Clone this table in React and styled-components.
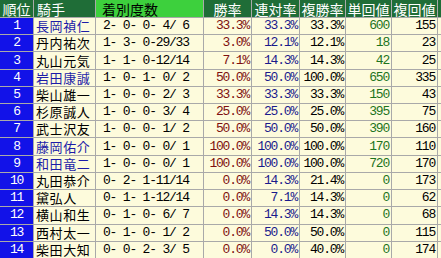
import React from "react";
import styled, { createGlobalStyle } from "styled-components";

const rows = [
  ["長岡禎仁", true, "2- 0- 0- 4/ 6", "33.3%", "33.3%", "33.3%", "600", "155"],
  ["丹内祐次", false, "1- 3- 0-29/33", "3.0%", "12.1%", "12.1%", "18", "23"],
  ["丸山元気", false, "1- 1- 0-12/14", "7.1%", "14.3%", "14.3%", "42", "25"],
  ["岩田康誠", true, "1- 0- 1- 0/ 2", "50.0%", "50.0%", "100.0%", "650", "335"],
  ["柴山雄一", false, "1- 0- 0- 2/ 3", "33.3%", "33.3%", "33.3%", "150", "43"],
  ["杉原誠人", false, "1- 0- 0- 3/ 4", "25.0%", "25.0%", "25.0%", "395", "75"],
  ["武士沢友", false, "1- 0- 0- 1/ 2", "50.0%", "50.0%", "50.0%", "390", "160"],
  ["藤岡佑介", true, "1- 0- 0- 0/ 1", "100.0%", "100.0%", "100.0%", "170", "110"],
  ["和田竜二", true, "1- 0- 0- 0/ 1", "100.0%", "100.0%", "100.0%", "720", "170"],
  ["丸田恭介", false, "0- 2- 1-11/14", "0.0%", "14.3%", "21.4%", "0", "173"],
  ["黛弘人", false, "0- 1- 1-12/14", "0.0%", "7.1%", "14.3%", "0", "62"],
  ["横山和生", false, "0- 1- 0- 6/ 7", "0.0%", "14.3%", "14.3%", "0", "68"],
  ["西村太一", false, "0- 1- 0- 1/ 2", "0.0%", "50.0%", "50.0%", "0", "115"],
  ["柴田大知", false, "0- 0- 2- 3/ 5", "0.0%", "0.0%", "40.0%", "0", "174"],
];

const GlobalStyle = createGlobalStyle`
  body {
    margin: 0;
    background: #ffffff;
    overflow: hidden;
  }
`;

const Table = styled.div`
  display: grid;
  grid-template-columns: 33px 61px 107px 47px 47px 45px 45px 45px 1fr;
  grid-template-rows: 17px repeat(14, 1fr);
  gap: 1px;
  width: 441px;
  height: 258px;
  background: #a9a9a9;
`;

const Cell = styled.div`
  display: flex;
  align-items: center;
  min-width: 0;
  white-space: pre;
  line-height: 16px;
`;

const HeadCell = styled(Cell)`
  justify-content: ${(p) => (p.$left ? "flex-start" : "center")};
  padding-left: ${(p) => p.$left || "0"};
  background: ${(p) => (p.$bright ? "#3dd03d" : "#1f6d37")};
  color: ${(p) => (p.$bright ? "#000000" : "#ffffff")};
  font-family: "Noto Sans CJK JP", sans-serif;
  font-size: 14px;
`;

const RankCell = styled(Cell)`
  justify-content: center;
  background: #1212e8;
  color: #ffffff;
  font-family: "Liberation Mono", monospace;
  font-size: 13px;
  letter-spacing: -1.2px;
`;

const NameCell = styled(Cell)`
  padding-left: 2px;
  background: #fdfbdc;
  color: ${(p) => (p.$blue ? "#1c1ca8" : "#000000")};
  font-family: "Noto Sans CJK JP", sans-serif;
  font-size: 13px;
  letter-spacing: 0.6px;
`;

const NumCell = styled(Cell)`
  justify-content: ${(p) => (p.$left ? "flex-start" : "flex-end")};
  padding: 0 ${(p) => (p.$left ? "0" : "2px")} 0 ${(p) => (p.$left ? "7px" : "0")};
  background: #fdfbdc;
  color: ${(p) => p.$color || "#000000"};
  font-family: "Liberation Mono", monospace;
  font-size: 13px;
  letter-spacing: -1.2px;
`;

const FillCell = styled(Cell)`
  background: ${(p) => (p.$head ? "#1f6d37" : "#fdfbdc")};
`;

export default function App() {
  return (
    <>
      <GlobalStyle />
      <Table>
        <HeadCell>順位</HeadCell>
        <HeadCell $left="3px">騎手</HeadCell>
        <HeadCell $bright $left="6px">着別度数</HeadCell>
        <HeadCell>勝率</HeadCell>
        <HeadCell>連対率</HeadCell>
        <HeadCell>複勝率</HeadCell>
        <HeadCell>単回値</HeadCell>
        <HeadCell>複回値</HeadCell>
        <FillCell $head />
        {rows.map(([name, blue, rec, win, ren, fuku, tan, fukuv], i) => (
          <React.Fragment key={i}>
            <RankCell>{i + 1}</RankCell>
            <NameCell $blue={blue}>{name}</NameCell>
            <NumCell $left>{rec}</NumCell>
            <NumCell $color="#7d1010">{win}</NumCell>
            <NumCell $color="#1a1a8c">{ren}</NumCell>
            <NumCell>{fuku}</NumCell>
            <NumCell $color="#1d741d">{tan}</NumCell>
            <NumCell>{fukuv}</NumCell>
            <FillCell />
          </React.Fragment>
        ))}
      </Table>
    </>
  );
}
